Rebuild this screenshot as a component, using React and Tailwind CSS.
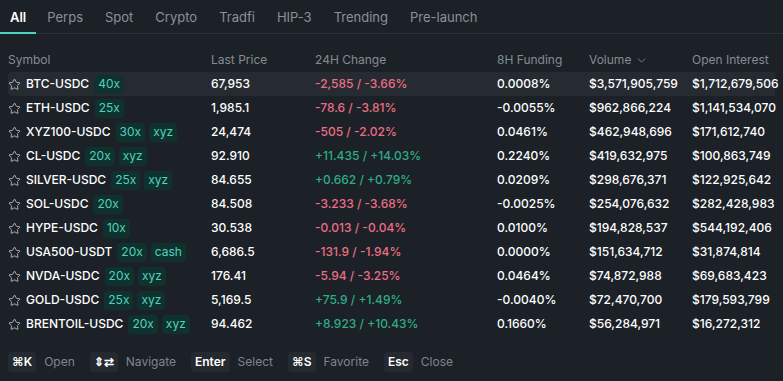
import { Star, ChevronDown } from "lucide-react";

const tabs = ["All", "Perps", "Spot", "Crypto", "Tradfi", "HIP-3", "Trending", "Pre-launch"];

const rows = [
  { sym: "BTC-USDC", tags: ["40x"], price: "67,953", chg: "-2,585 / -3.66%", up: false, fund: "0.0008%", vol: "$3,571,905,759", oi: "$1,712,679,506" },
  { sym: "ETH-USDC", tags: ["25x"], price: "1,985.1", chg: "-78.6 / -3.81%", up: false, fund: "-0.0055%", vol: "$962,866,224", oi: "$1,141,534,070" },
  { sym: "XYZ100-USDC", tags: ["30x", "xyz"], price: "24,474", chg: "-505 / -2.02%", up: false, fund: "0.0461%", vol: "$462,948,696", oi: "$171,612,740" },
  { sym: "CL-USDC", tags: ["20x", "xyz"], price: "92.910", chg: "+11.435 / +14.03%", up: true, fund: "0.2240%", vol: "$419,632,975", oi: "$100,863,749" },
  { sym: "SILVER-USDC", tags: ["25x", "xyz"], price: "84.655", chg: "+0.662 / +0.79%", up: true, fund: "0.0209%", vol: "$298,676,371", oi: "$122,925,642" },
  { sym: "SOL-USDC", tags: ["20x"], price: "84.508", chg: "-3.233 / -3.68%", up: false, fund: "-0.0025%", vol: "$254,076,632", oi: "$282,428,983" },
  { sym: "HYPE-USDC", tags: ["10x"], price: "30.538", chg: "-0.013 / -0.04%", up: false, fund: "0.0100%", vol: "$194,828,537", oi: "$544,192,406" },
  { sym: "USA500-USDT", tags: ["20x", "cash"], price: "6,686.5", chg: "-131.9 / -1.94%", up: false, fund: "0.0000%", vol: "$151,634,712", oi: "$31,874,814" },
  { sym: "NVDA-USDC", tags: ["20x", "xyz"], price: "176.41", chg: "-5.94 / -3.25%", up: false, fund: "0.0464%", vol: "$74,872,988", oi: "$69,683,423" },
  { sym: "GOLD-USDC", tags: ["25x", "xyz"], price: "5,169.5", chg: "+75.9 / +1.49%", up: true, fund: "-0.0040%", vol: "$72,470,700", oi: "$179,593,799" },
  { sym: "BRENTOIL-USDC", tags: ["20x", "xyz"], price: "94.462", chg: "+8.923 / +10.43%", up: true, fund: "0.1660%", vol: "$56,284,971", oi: "$16,272,312" },
];

const cols = "grid grid-cols-[203px_104px_182px_92px_103px_1fr] items-center";

const hints = [
  ["⌘K", "Open"],
  ["⇕⇄", "Navigate"],
  ["Enter", "Select"],
  ["⌘S", "Favorite"],
  ["Esc", "Close"],
];

export default function App() {
  return (
    <div
      className="w-[783px] h-[381px] bg-[#1b2127] text-[#e8eaec] overflow-hidden flex flex-col"
      style={{ fontFamily: "Inter, 'Noto Sans', sans-serif" }}
    >
      <div className="flex border-b border-[#2a3138] h-[34px] items-stretch">
        {tabs.map((t, i) => (
          <div
            key={t}
            className={
              "flex items-center pt-1 text-[13px] -mb-px border-b-2 " +
              (i === 0
                ? "border-[#50d2c1] text-white font-semibold px-[10px]"
                : "border-transparent text-[#8a9197] px-[11px]")
            }
          >
            {t}
          </div>
        ))}
      </div>

      <div className="px-2 pt-[17px]">
        <div className={cols + " h-[18px] text-[12px] text-[#858c92]"}>
          <div>Symbol</div>
          <div>Last Price</div>
          <div>24H Change</div>
          <div>8H Funding</div>
          <div className="flex items-center gap-1">
            Volume <ChevronDown size={13} strokeWidth={1.6} />
          </div>
          <div>Open Interest</div>
        </div>

        <div className="mt-[3px]">
          {rows.map((r, i) => (
            <div
              key={r.sym}
              className={
                cols +
                " h-[24px] text-[12px] font-medium rounded-l " +
                (i === 0 ? "bg-[#252b31]" : "")
              }
            >
              <div className="flex items-center">
                <Star size={13} strokeWidth={1.5} className="text-[#c9cdd1] mr-[5px]" />
                <span className="text-white">{r.sym}</span>
                {r.tags.map((t, j) => (
                  <span
                    key={t}
                    className={
                      (j === 0 ? "ml-[5px]" : "ml-[4px]") +
                      " px-[4px] h-[19px] flex items-center rounded bg-[#10322e] text-[#4fd1bd] font-normal"
                    }
                  >
                    {t}
                  </span>
                ))}
              </div>
              <div className="text-white">{r.price}</div>
              <div className={r.up ? "text-[#2dae86]" : "text-[#ec6e85]"}>{r.chg}</div>
              <div className="text-white">{r.fund}</div>
              <div className="text-white">{r.vol}</div>
              <div className="text-white">{r.oi}</div>
            </div>
          ))}
        </div>
      </div>

      <div className="flex items-center px-2 mt-auto mb-[9px] text-[12px]">
        {hints.map(([k, l]) => (
          <div key={l} className="flex items-center mr-[15px]">
            <span className="h-[20px] px-[4px] flex items-center rounded bg-[#242a30] text-white font-semibold">
              {k}
            </span>
            <span className="ml-[8px] text-[#7f868c]">{l}</span>
          </div>
        ))}
      </div>
    </div>
  );
}
